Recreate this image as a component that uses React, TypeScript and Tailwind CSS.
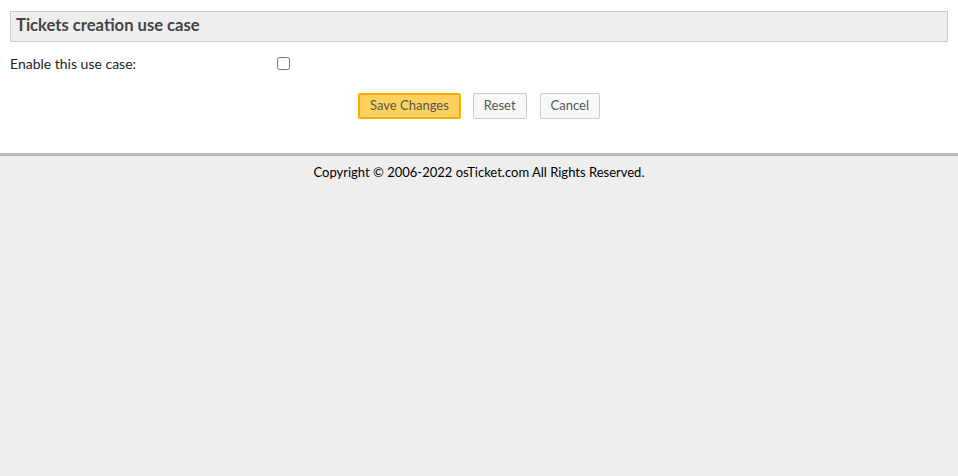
export default function App() {
  return (
    <div className="min-h-[476px] flex flex-col bg-[#eeeeee] font-['Lato','Noto_Sans',sans-serif] text-[13px] text-black">
      <div className="bg-white px-[10px] pt-[11px] h-[153px]">
        {/* Section header */}
        <div className="border border-[#cccccc] bg-[#eeeeee] h-[31px] flex items-start pt-[3px] px-[5px]">
          <h2 className="text-[16.6px] font-bold text-[#444444] leading-[20px]">Tickets creation use case</h2>
        </div>

        <div className="flex items-center mt-[14px] h-[14px]">
          <label className="w-[267px] text-[14px] text-[#222222]">Enable this use case:</label>
          <input type="checkbox" className="w-[13px] h-[13px] m-0" />
        </div>

        <div className="flex justify-center gap-[12px] mt-[23px]">
          <button className="h-[26px] px-[10px] text-[13px] text-[#555555] bg-[#ffd15c] border-2 border-[#f9ae00] rounded-[2px]">
            Save Changes
          </button>
          <button className="h-[26px] px-[10px] text-[13px] text-[#555555] bg-[#f8f8f8] border border-[#cccccc] rounded-[2px]">
            Reset
          </button>
          <button className="h-[26px] px-[10px] text-[13px] text-[#555555] bg-[#f8f8f8] border border-[#cccccc] rounded-[2px] ml-px">
            Cancel
          </button>
        </div>
      </div>

      <div className="border-t-[3px] border-[#bbbbbb] flex-1 bg-[#eeeeee]">
        <p className="text-center text-[13px] pt-[7px]">Copyright © 2006-2022 osTicket.com All Rights Reserved.</p>
      </div>
    </div>
  );
}
